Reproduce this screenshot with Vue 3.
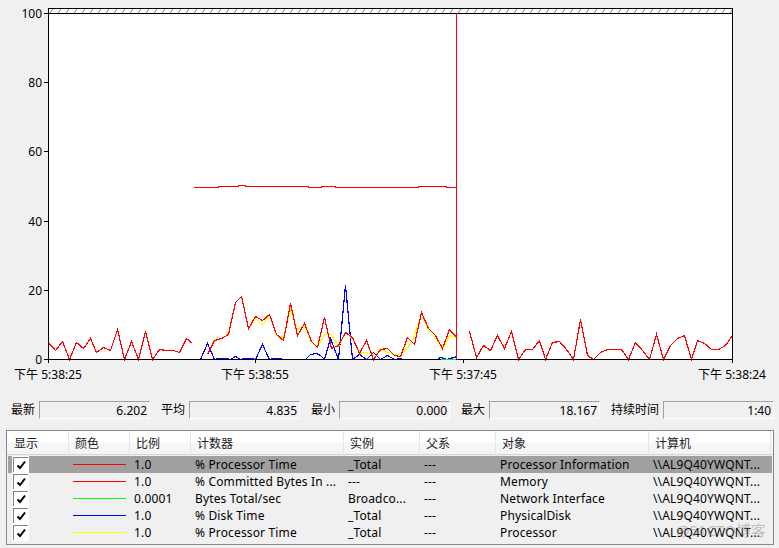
<script setup>
const toPts = (a) => a.map((p) => p.join(',')).join(' ')

const red1 = toPts([[48,342],[55,350],[62,341],[69,359],[76,342],[83,348],[90,338],[96,352],[103,347],[110,350],[117,329],[124,359],[131,341],[138,359],[145,331],[152,359],[159,349],[166,350],[173,350],[179,352],[186,338],[192,343]])
const red2 = toPts([[207,354],[214,340],[221,338],[228,334],[235,302],[241,296],[248,328],[255,316],[262,320],[269,314],[276,334],[283,340],[290,303],[297,335],[304,323],[311,341],[317,347],[324,317],[331,348],[338,345],[345,332],[352,337],[359,353],[366,340],[373,359],[380,349],[387,348],[394,355],[400,356],[407,337],[414,344],[421,312],[428,328],[435,335],[442,348],[449,329],[456,337]])
const red3 = toPts([[469,331],[476,357],[483,345],[490,350],[497,335],[504,348],[511,331],[518,359],[525,349],[532,349],[539,340],[545,359],[552,342],[559,341],[566,349],[573,359],[580,319],[587,355],[593,359],[600,352],[607,349],[621,349],[628,359],[635,342],[642,350],[649,359],[656,334],[663,359],[670,345],[677,338],[684,335],[691,359],[697,340],[704,343],[711,349],[718,349],[725,345],[732,335]])
const flat = toPts([[193,187],[218,187],[218,186],[238,186],[238,185],[245,185],[245,186],[308,186],[308,187],[321,187],[321,186],[335,186],[335,187],[418,187],[418,186],[446,186],[446,187],[456,187]])
const yellow = toPts([[207,354],[214,339],[221,338],[228,333],[235,302],[241,296],[248,328],[255,318],[262,325],[269,314],[276,335],[283,337],[290,309],[297,329],[304,325],[311,342],[317,346],[324,334],[330,333],[338,346],[345,332],[352,338],[359,353],[366,352],[373,355],[380,348],[387,352],[394,354],[400,354],[407,348],[414,335],[421,313],[428,330],[435,337],[442,349],[449,335],[456,337]])
const blue = toPts([[200,359],[207,343],[214,359],[218,358],[225,358],[230,359],[235,356],[240,359],[245,358],[252,358],[255,359],[262,344],[269,359],[273,358],[280,358],[283,359],[305,359],[310,354],[316,353],[320,355],[324,359],[330,338],[338,359],[345,285],[352,359],[359,354],[366,359],[373,352],[380,359],[387,355],[394,359],[400,358],[402,359],[437,359],[440,357],[447,359],[449,358],[454,357],[456,356]])

const yTicks = [
  { label: '100', y: 13 },
  { label: '80', y: 82 },
  { label: '60', y: 151 },
  { label: '40', y: 221 },
  { label: '20', y: 290 },
  { label: '0', y: 359 },
]
const xTicks = [
  { label: '下午 5:38:25', x: 48 },
  { label: '下午 5:38:55', x: 255 },
  { label: '下午 5:37:45', x: 463 },
  { label: '下午 5:38:24', x: 732 },
]
const stats = [
  { label: '最新', value: '6.202' },
  { label: '平均', value: '4.835' },
  { label: '最小', value: '0.000' },
  { label: '最大', value: '18.167' },
  { label: '持续时间', value: '1:40' },
]
const headers = ['显示', '颜色', '比例', '计数器', '实例', '父系', '对象', '计算机']
const pc = '\\\\AL9Q40YWQNT...'
const rows = [
  { color: '#ff0000', scale: '1.0', counter: '% Processor Time', inst: '_Total', parent: '---', obj: 'Processor Information', pc, selected: true },
  { color: '#ff0000', scale: '1.0', counter: '% Committed Bytes In ...', inst: '---', parent: '---', obj: 'Memory', pc },
  { color: '#00ff00', scale: '0.0001', counter: 'Bytes Total/sec', inst: 'Broadco...', parent: '---', obj: 'Network Interface', pc },
  { color: '#0000ff', scale: '1.0', counter: '% Disk Time', inst: '_Total', parent: '---', obj: 'PhysicalDisk', pc },
  { color: '#ffff00', scale: '1.0', counter: '% Processor Time', inst: '_Total', parent: '---', obj: 'Processor', pc },
]
</script>

<template>
  <div class="app">
    <svg class="chart" width="779" height="392" viewBox="0 0 779 392">
      <defs>
        <pattern id="hatch" width="8" height="4" patternUnits="userSpaceOnUse" patternTransform="translate(50 9)">
          <path d="M0 4 L3 0" stroke="#777" stroke-width="1" fill="none" />
        </pattern>
      </defs>
      <rect x="48" y="8" width="684" height="351" fill="#fff" />
      <rect x="49" y="9" width="683" height="4" fill="url(#hatch)" />
      <g class="crisp" transform="translate(0.5 0.5)">
        <polyline :points="blue" stroke="#0000ff" />
        <polyline :points="yellow" stroke="#ffff00" />
        <polyline :points="red1" stroke="#ff0000" />
        <polyline :points="red2" stroke="#ff0000" />
        <polyline :points="red3" stroke="#ff0000" />
        <polyline :points="flat" stroke="#ff0000" />
      </g>
      <g class="axes">
        <path d="M48.5 8V362 M732.5 8V362 M48 8.5H733 M48 13.5H733 M44 359.5H733" />
        <path v-for="t in yTicks" :key="t.y" :d="`M44 ${t.y + 0.5}H48`" />
        <path v-for="t in xTicks" :key="t.x" :d="`M${t.x + 0.5} 359V363`" />
      </g>
      <path d="M441 359.5H456" stroke="#00ff00" fill="none" shape-rendering="crispEdges" />
      <rect x="456" y="13" width="1" height="346" fill="#ff0000" />
      <text v-for="t in yTicks" :key="t.label" class="lbl" x="42" :y="t.y + 5" text-anchor="end">{{ t.label }}</text>
      <text v-for="t in xTicks" :key="t.label" class="lbl" :x="t.x" y="379" text-anchor="middle">{{ t.label }}</text>
    </svg>

    <div class="stats">
      <div v-for="s in stats" :key="s.label" class="stat">
        <span class="stat-label">{{ s.label }}</span>
        <span class="stat-box">{{ s.value }}</span>
      </div>
    </div>

    <div class="table">
      <div class="thead">
        <div v-for="h in headers" :key="h" class="th">{{ h }}</div>
      </div>
      <div v-for="(r, i) in rows" :key="i" class="tr" :class="{ selected: r.selected }">
        <div class="td check-cell">
          <span class="check">
            <svg width="11" height="11" viewBox="0 0 11 11"><path d="M1.5 5.5 L4 8 L9 1.5" fill="none" stroke="#000" stroke-width="2" /></svg>
          </span>
        </div>
        <div class="td swatch-cell"><span class="swatch" :style="{ background: r.color }"></span></div>
        <div class="td">{{ r.scale }}</div>
        <div class="td">{{ r.counter }}</div>
        <div class="td">{{ r.inst }}</div>
        <div class="td">{{ r.parent }}</div>
        <div class="td">{{ r.obj }}</div>
        <div class="td">{{ r.pc }}</div>
      </div>
      <span class="watermark">@51CTO博客</span>
    </div>
  </div>
</template>

<style>
html, body { margin: 0; background: #f0f0f0; }
</style>

<style scoped>
.app {
  position: relative;
  width: 779px;
  height: 548px;
  overflow: hidden;
  background: #f0f0f0;
  color: #000;
  font-family: "Noto Sans", "Noto Sans CJK SC", sans-serif;
  font-size: 12px;
}
.chart { display: block; }
.crisp polyline { fill: none; stroke-width: 1.2; shape-rendering: crispEdges; }
.axes path { fill: none; stroke: #000; stroke-width: 1; shape-rendering: crispEdges; }
.lbl { font-size: 12px; fill: #000; }

.stats {
  display: flex;
  gap: 11px;
  margin-top: 9px;
  padding-left: 11px;
}
.stat { display: flex; gap: 4px; align-items: center; }
.stat-label { line-height: 18px; }
.stat-box {
  box-sizing: border-box;
  width: 111px;
  height: 18px;
  line-height: 17px;
  text-align: right;
  padding-right: 2px;
  border-top: 1px solid #a0a0a0;
  border-left: 1px solid #a0a0a0;
  border-right: 1px solid #fff;
  border-bottom: 1px solid #fff;
}

.table {
  position: relative;
  box-sizing: border-box;
  width: 768px;
  height: 115px;
  margin: 11px 0 0 6px;
  border: 1px solid #828790;
}
.thead {
  display: grid;
  grid-template-columns: 62px 61px 61px 153px 76px 76px 153px 122px;
  box-sizing: border-box;
  height: 24px;
  margin-bottom: 1px;
  background: linear-gradient(#fff 0 45%, #f6f7f9 55%, #f3f4f6);
  border-bottom: 1px solid #d5d5d5;
}
.tr {
  display: grid;
  grid-template-columns: 61px 61px 61px 153px 76px 76px 153px 122px;
  height: 17px;
  margin-left: 1px;
  margin-right: 1px;
}
.th {
  padding-left: 6px;
  line-height: 25px;
  color: #222;
  border-right: 1px solid #e4e5e8;
}
.th:first-child { padding-left: 7px; }
.tr.selected { background: #a0a0a0; }
.td {
  padding-left: 4px;
  line-height: 17px;
  letter-spacing: 0.15px;
  white-space: nowrap;
  overflow: hidden;
}
.check-cell { padding-left: 5px; overflow: visible; }
.check {
  display: flex;
  align-items: center;
  justify-content: center;
  box-sizing: border-box;
  width: 15px;
  height: 15px;
  margin-top: 1px;
  background: #fff;
  border-top: 1px solid #808080;
  border-left: 1px solid #808080;
  outline: 1px solid #fff;
}
.swatch-cell { display: flex; align-items: center; padding-left: 4px; }
.swatch { display: block; width: 53px; height: 1px; }
.watermark {
  position: absolute;
  left: 669px;
  top: 88px;
  font-size: 15px;
  color: rgba(130, 130, 130, 0.45);
  pointer-events: none;
}
</style>
